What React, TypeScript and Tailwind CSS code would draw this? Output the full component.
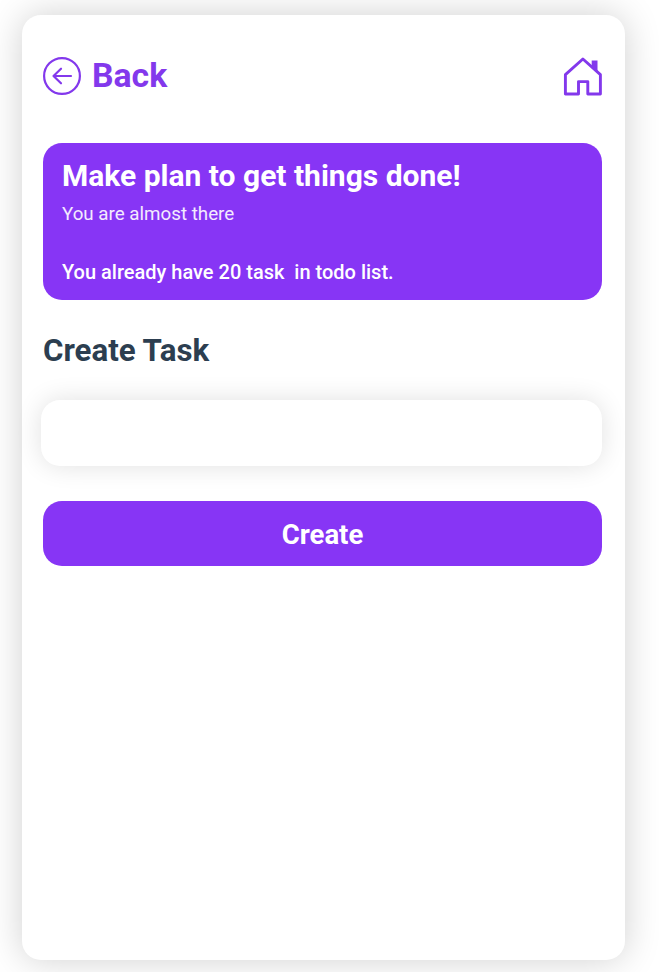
function BackIcon() {
  return (
    <svg className="size-[38px] shrink-0" viewBox="0 0 38 38" fill="none" stroke="#8338ec" strokeWidth="2.2" strokeLinecap="round" strokeLinejoin="round">
      <circle cx="19" cy="19" r="17.9" />
      <path d="M28 19H10.5M18 11.7l-7.5 7.3 7.5 7.3" />
    </svg>
  );
}

function HomeIcon() {
  return (
    <svg className="h-[39px] w-[39px]" viewBox="0 0 39 39" fill="none" stroke="#8338ec" strokeWidth="2.9" strokeLinejoin="round">
      <path d="M2.4 17.7 19.9 2 37.4 17.7V37H24.8V24.6H15.5V37H2.4Z" />
      <path d="M28.7 3.4h5.8v11L28.7 9Z" fill="#8338ec" stroke="none" />
    </svg>
  );
}

export default function App() {
  return (
    <main className="h-[972px] w-[659px] overflow-hidden bg-white pt-[15px] pl-[22px] font-['Roboto',sans-serif]">
      <section className="h-[945px] w-[602.5px] rounded-[19px] bg-white pt-[41.5px] pr-[22.5px] pl-[21px] shadow-[0_0_36px_rgba(0,0,0,0.19)]">
        <header className="flex h-[39px] items-center justify-between">
          <button className="flex items-center gap-[11px] text-[33.75px] leading-[38px] font-bold text-[#8338ec]">
            <BackIcon />
            <span>Back</span>
          </button>
          <button aria-label="Home"><HomeIcon /></button>
        </header>
        <div className="mt-[47px] flex h-[157.5px] flex-col rounded-[19px] bg-[#8735f5] pt-[14px] pl-[19px] text-white">
          <h1 className="text-[30px] leading-[38px] font-bold whitespace-nowrap">Make plan to get things done!</h1>
          <p className="mt-[7px] text-[18.75px] leading-6 text-white/90">You are almost there</p>
          <p className="mt-[34px] text-[20px] leading-6 font-medium whitespace-pre">You already have 20 task  in todo list.</p>
        </div>
        <h2 className="mt-[31px] text-[31.25px] leading-[40px] font-bold text-[#2c3e50]">Create Task</h2>
        <input aria-label="Task" className="mt-[29px] -ml-[2px] block h-[66px] w-[561px] rounded-[19px] bg-white px-5 text-xl shadow-[0_0_26px_rgba(0,0,0,0.12)] outline-none" />
        <button className="mt-[35px] block h-[65px] w-full rounded-[19px] bg-[#8735f5] pt-[2px] text-[27.5px] font-bold text-white">Create</button>
      </section>
    </main>
  );
}
